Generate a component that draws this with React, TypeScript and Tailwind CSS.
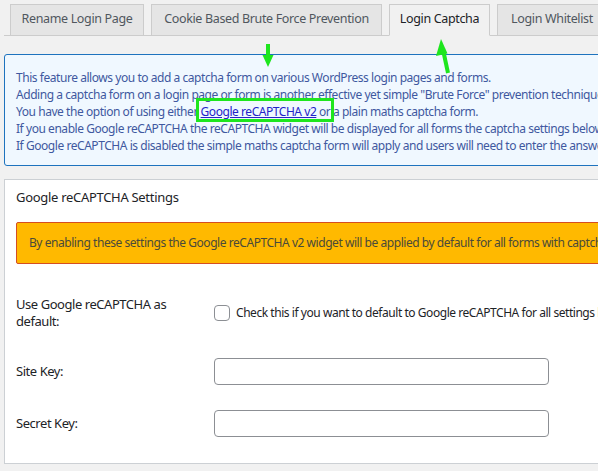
import React from "react";

const font = { fontFamily: '"Noto Sans", "Open Sans", Arial, sans-serif' };

const tabs = [
  { label: "Rename Login Page", w: "w-[134px]", active: false },
  { label: "Cookie Based Brute Force Prevention", w: "w-[231px]", active: false },
  { label: "Login Captcha", w: "w-[101px]", active: true },
  { label: "Login Whitelist", w: "w-[110px]", active: false },
];

function Tabs() {
  return (
    <div className="ml-[4px] mt-[4px] flex gap-[7px] border-b border-[#cccccc] pl-[6px]">
      {tabs.map((t) => (
        <div
          key={t.label}
          className={
            "-mb-px flex h-[32px] shrink-0 items-center justify-center border border-[#cccccc] pb-[1px] text-[12.5px] tracking-[-0.35px] " +
            t.w +
            (t.active
              ? " border-b-[#f1f1f1] bg-[#f1f1f1] text-[#1d2327]"
              : " bg-[#e5e5e5] text-[#50575e]")
          }
        >
          {t.label}
        </div>
      ))}
    </div>
  );
}

function InfoBox() {
  return (
    <div className="ml-[4px] mt-[18px] w-[900px] rounded-[3px] border border-[#1e73be] bg-[#f0f8ff] px-[11px] pb-[11px] pt-[14px] text-[12px] leading-[17px] tracking-[-0.45px] text-[#3f58a0]">
      <p>This feature allows you to add a captcha form on various WordPress login pages and forms.</p>
      <p>
        Adding a captcha form on a login page or form is another effective yet simple "Brute Force" prevention technique.
      </p>
      <p>
        You have the option of using either{" "}
        <a className="text-[#2323c8] underline">Google reCAPTCHA v2</a> or a plain maths captcha form.
      </p>
      <p>
        If you enable Google reCAPTCHA the reCAPTCHA widget will be displayed for all forms the captcha settings below are enabled for.
      </p>
      <p>
        If Google reCAPTCHA is disabled the simple maths captcha form will apply and users will need to enter the answer.
      </p>
    </div>
  );
}

function SettingsBox() {
  return (
    <div className="ml-[4px] mt-[13px] w-[900px] border border-[#ccd0d4] bg-white px-[11px] pb-[16px] text-[12px] tracking-[-0.45px] text-[#1d2327]">
      <h3 className="pt-[8px] text-[13px] font-normal leading-[18px] tracking-[-0.3px]">Google reCAPTCHA Settings</h3>
      <div className="mt-[16px] flex h-[42px] items-center rounded-[2px] border border-[#d54e21] bg-[#ffb900] px-[12px] text-[#4a4a3a]">
        By enabling these settings the Google reCAPTCHA v2 widget will be applied by default for all forms with captcha enabled.
      </div>
      <div className="mt-[19px] flex h-[60px] items-center">
        <div className="w-[198px] shrink-0 text-[13px] leading-[17px]">
          Use Google reCAPTCHA as
          <br />
          default:
        </div>
        <div className="flex items-center gap-[6px]">
          <span className="h-[16px] w-[16px] rounded-[4px] border border-[#8c8f94] bg-white" />
          <span>Check this if you want to default to Google reCAPTCHA for all settings below.</span>
        </div>
      </div>
      <div className="flex h-[57px] items-center">
        <div className="w-[198px] shrink-0 text-[13px]">Site Key:</div>
        <div className="h-[27px] w-[335px] rounded-[4px] border border-[#8c8f94] bg-white" />
      </div>
      <div className="flex h-[47px] items-center">
        <div className="w-[198px] shrink-0 text-[13px]">Secret Key:</div>
        <div className="h-[27px] w-[335px] rounded-[4px] border border-[#8c8f94] bg-white" />
      </div>
    </div>
  );
}

function Annotations() {
  return (
    <>
      <svg className="pointer-events-none absolute left-0 top-0" width="598" height="471">
        <line x1="268" y1="44" x2="268" y2="57" stroke="#1ee61e" strokeWidth="4" />
        <polygon points="262.5,55 273.5,55 268,67" fill="#1ee61e" />
        <line x1="448" y1="73" x2="443.5" y2="52" stroke="#1ee61e" strokeWidth="4" />
        <polygon points="441,39 436,56 447.5,53.5" fill="#1ee61e" />
      </svg>
      <div className="pointer-events-none absolute left-[196px] top-[98px] h-[24px] w-[138px] border-[3px] border-[#1ee61e]" />
    </>
  );
}

export default function App() {
  return (
    <div className="relative h-[471px] w-[598px] overflow-hidden bg-[#f1f1f1]" style={font}>
      <Tabs />
      <InfoBox />
      <SettingsBox />
      <Annotations />
    </div>
  );
}
